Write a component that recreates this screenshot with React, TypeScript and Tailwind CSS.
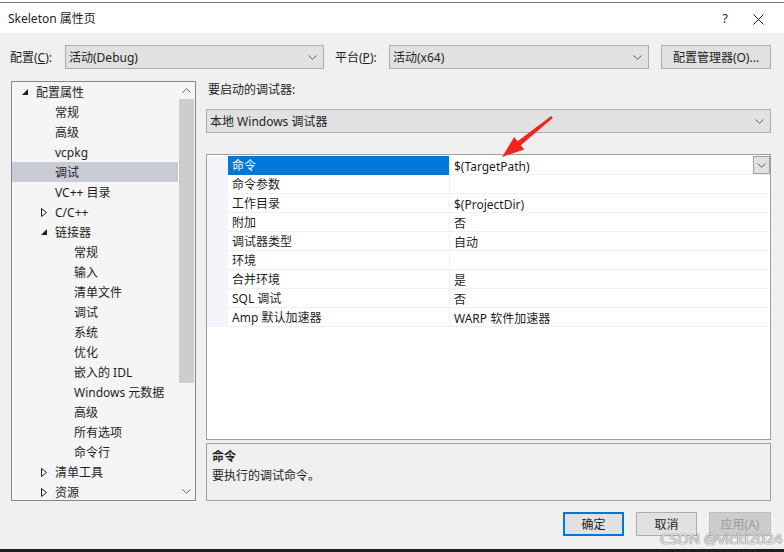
import React from "react"

const FONT = { fontFamily: '"Noto Sans", "Noto Sans CJK SC", sans-serif' }

type Node = { label: string; level: 1 | 2 | 3; toggle?: "open" | "closed"; selected?: boolean }

const TREE: Node[] = [
  { label: "配置属性", level: 1, toggle: "open" },
  { label: "常规", level: 2 },
  { label: "高级", level: 2 },
  { label: "vcpkg", level: 2 },
  { label: "调试", level: 2, selected: true },
  { label: "VC++ 目录", level: 2 },
  { label: "C/C++", level: 2, toggle: "closed" },
  { label: "链接器", level: 2, toggle: "open" },
  { label: "常规", level: 3 },
  { label: "输入", level: 3 },
  { label: "清单文件", level: 3 },
  { label: "调试", level: 3 },
  { label: "系统", level: 3 },
  { label: "优化", level: 3 },
  { label: "嵌入的 IDL", level: 3 },
  { label: "Windows 元数据", level: 3 },
  { label: "高级", level: 3 },
  { label: "所有选项", level: 3 },
  { label: "命令行", level: 3 },
  { label: "清单工具", level: 2, toggle: "closed" },
  { label: "资源", level: 2, toggle: "closed" },
]

const PROPS: [string, string][] = [
  ["命令", "$(TargetPath)"],
  ["命令参数", ""],
  ["工作目录", "$(ProjectDir)"],
  ["附加", "否"],
  ["调试器类型", "自动"],
  ["环境", ""],
  ["合并环境", "是"],
  ["SQL 调试", "否"],
  ["Amp 默认加速器", "WARP 软件加速器"],
]

function Chevron({ up = false }: { up?: boolean }) {
  return (
    <svg width="9" height="5" viewBox="0 0 9 5">
      <path d={up ? "M0.5 4.5 L4.5 0.8 L8.5 4.5" : "M0.5 0.5 L4.5 4.2 L8.5 0.5"} fill="none" stroke="#606060" strokeWidth="1" />
    </svg>
  )
}

function Toggle({ kind }: { kind: "open" | "closed" }) {
  if (kind === "open")
    return (
      <svg width="6" height="6" viewBox="0 0 6 6">
        <path d="M6 0 L6 6 L0 6 Z" fill="#1e1e1e" />
      </svg>
    )
  return (
    <svg width="6" height="9" viewBox="0 0 6 9">
      <path d="M0.5 0.5 L5.5 4.5 L0.5 8.5 Z" fill="none" stroke="#1e1e1e" strokeWidth="1" />
    </svg>
  )
}

function Select({ value, w }: { value: string; w: string }) {
  return (
    <div className={`${w} h-[24px] flex items-center justify-between border border-[#adadad] bg-[#e1e1e1] pl-[3px] pr-[6px] text-[12px] text-[#1e1e1e]`}>
      <span className="pt-[2px]">{value}</span>
      <Chevron />
    </div>
  )
}

export default function App() {
  return (
    <div className="relative w-[784px] h-[552px] overflow-hidden bg-[#f0f0f0] flex flex-col text-[#1e1e1e]" style={FONT}>
      <div className="h-[2px] bg-white" />
      {/* title bar */}
      <div className="h-[31px] bg-white border-t border-[#7a7a7a] flex items-center pl-[8px] pt-[2px] text-[12px]">
        <span className="flex-1">Skeleton 属性页</span>
        <span className="w-[30px] text-center text-[13px]">?</span>
        <span className="w-[36px] flex justify-center mr-[8px]">
          <svg width="11" height="11" viewBox="0 0 11 11">
            <path d="M0.5 0.5 L10.5 10.5 M10.5 0.5 L0.5 10.5" stroke="#1e1e1e" strokeWidth="1" />
          </svg>
        </span>
      </div>

      <div className="flex-1 flex flex-col">
        {/* config row */}
        <div className="mt-[12px] flex items-center pl-[10px] text-[12px]">
          <span className="w-[55px] pt-[2px]">配置(<u>C</u>):</span>
          <Select value="活动(Debug)" w="w-[259px]" />
          <span className="ml-[11px] w-[54px] pt-[2px]">平台(<u>P</u>):</span>
          <Select value="活动(x64)" w="w-[260px]" />
          <div className="ml-[12px] w-[110px] h-[24px] flex items-center justify-center pt-[2px] border border-[#adadad] bg-[#e1e1e1]">配置管理器(O)...</div>
        </div>

        <div className="mt-[12px] flex pl-[11px] text-[12px]">
          {/* tree */}
          <div className="w-[185px] h-[420px] border border-[#828790] bg-[#f5f5f5] flex">
            <div className="flex-1 flex flex-col">
              {TREE.map((n, i) => (
                <div key={i} className={`h-[20px] flex items-center ${n.selected ? "bg-[#c9cbd6]" : ""}`}>
                  <div className={`flex items-center justify-end pr-[8px] ${n.level === 1 ? "w-[24px]" : n.level === 2 ? "w-[43px]" : "w-[62px]"}`}>
                    {n.toggle && <Toggle kind={n.toggle} />}
                  </div>
                  <span className="leading-[20px] pt-[2px]">{n.label}</span>
                </div>
              ))}
            </div>
            <div className="w-[17px] flex flex-col">
              <div className="h-[17px] flex items-center justify-center"><Chevron up /></div>
              <div className="mx-[1px] h-[284px] bg-[#cdcdcd]" />
              <div className="flex-1" />
              <div className="h-[17px] flex items-center justify-center"><Chevron /></div>
            </div>
          </div>

          {/* right side */}
          <div className="ml-[10px] w-[565px] flex flex-col">
            <div className="h-[16px] leading-[16px] pl-[2px] pt-[1px]">要启动的调试器:</div>
            <div className="mt-[12px]">
              <Select value="本地 Windows 调试器" w="w-[565px]" />
            </div>
            <div className="mt-[21px] h-[286px] border border-[#a0a0a0] bg-white pt-[1px]">
              {PROPS.map(([k, v], i) => (
                <div key={i} className="h-[19px] flex">
                  <div className="w-[21px] bg-[#f3f5fa]" />
                  <div className={`w-[221px] pl-[4px] pt-[1px] leading-[18px] border-b ${i === 0 ? "bg-[#0078d7] text-white border-[#0078d7]" : "border-[#eef0f4]"}`}>{k}</div>
                  <div className="flex-1 flex items-center justify-between pl-[4px] border-l border-b border-[#eef0f4]">
                    <span className="pt-[2px] leading-[17px]">{v}</span>
                    {i === 0 && (
                      <div className="w-[17px] h-[18px] flex items-center justify-center border border-[#a0a0a0] bg-[#e1e1e1]">
                        <Chevron />
                      </div>
                    )}
                  </div>
                </div>
              ))}
            </div>
            <div className="mt-[3px] h-[58px] border border-[#a0a0a0] bg-[#f0f0f0] pl-[5px] pt-[3px]">
              <div className="font-bold leading-[19px]">命令</div>
              <div className="leading-[19px]">要执行的调试命令。</div>
            </div>
          </div>
        </div>

        {/* buttons */}
        <div className="mt-[11px] flex justify-end gap-[12px] pr-[13px] text-[12px]">
          <div className="w-[61px] h-[24px] flex items-center justify-center pt-[2px] border-2 border-[#0078d7] bg-[#e1e1e1]">确定</div>
          <div className="w-[61px] h-[24px] flex items-center justify-center pt-[2px] border border-[#adadad] bg-[#e1e1e1]">取消</div>
          <div className="w-[62px] h-[24px] flex items-center justify-center pt-[2px] border border-[#bfbfbf] bg-[#cccccc] text-[#9a9a9a]">应用(A)</div>
        </div>
      </div>
      <div className="h-[3px] bg-[#1f1f1f]" />

      {/* annotation arrow */}
      <svg className="absolute left-0 top-0 pointer-events-none" width="784" height="552">
        <polygon points="552.8,118.0 520.8,145.3 524.2,149.6 502,157 514.2,137.0 517.6,141.3 551.2,116.0" fill="#f0261c" />
      </svg>
      {/* watermark */}
      <div className="absolute left-[660px] top-[529px] text-[15px] leading-[18px] text-[#e6e6e6] pointer-events-none" style={{ textShadow: "0 0 1px #6a6a6a, 0 0 1px #6a6a6a" }}>
        CSDN @vicki2024
      </div>
    </div>
  )
}
